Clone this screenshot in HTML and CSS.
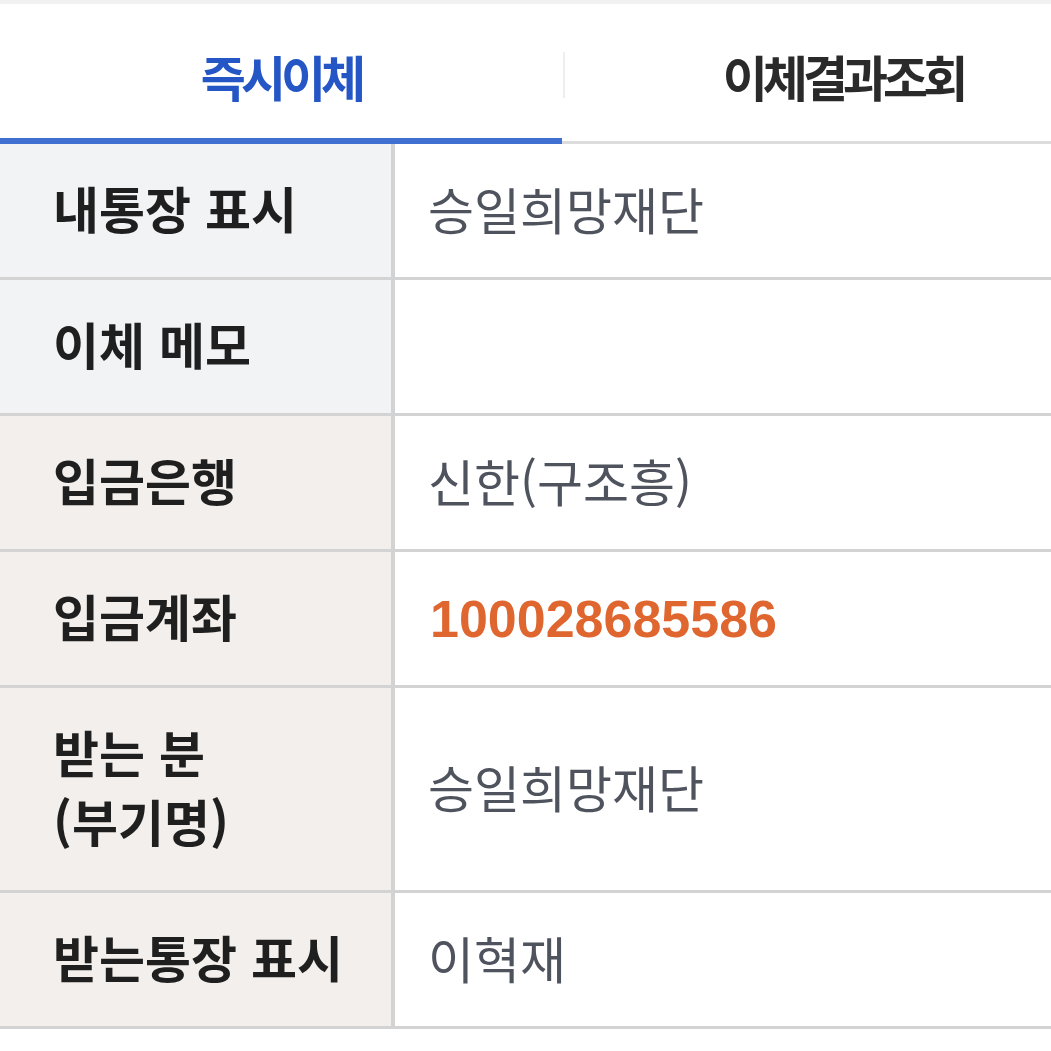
FILE: index.html
```html
<!DOCTYPE html>
<html lang="ko">
<head>
<meta charset="utf-8">
<link rel="stylesheet" href="styles.css">
</head>
<body>
<div class="topband"></div>
<nav class="tabs">
  <div class="tab active"><span>즉시이체</span></div>
  <div class="tab"><span class="sep"></span><span>이체결과조회</span></div>
</nav>
<div class="table">
  <div class="row cool"><div class="label">내통장 표시</div><div class="value">승일희망재단</div></div>
  <div class="row cool"><div class="label">이체 메모</div><div class="value"></div></div>
  <div class="row warm"><div class="label">입금은행</div><div class="value">신한(구조흥)</div></div>
  <div class="row warm"><div class="label">입금계좌</div><div class="value num">100028685586</div></div>
  <div class="row warm"><div class="label">받는 분<br>(부기명)</div><div class="value">승일희망재단</div></div>
  <div class="row warm"><div class="label">받는통장 표시</div><div class="value">이혁재</div></div>
</div>
</body>
</html>
```

FILE: styles.css
```css
* { box-sizing: border-box; }
html, body { margin: 0; padding: 0; background: #fff; overflow: hidden; }
body {
  font-family: "Noto Sans CJK KR", "Noto Sans", sans-serif;
  color: #222;
}
.topband { height: 4px; background: #f1f1f2; }
.tabs {
  display: flex;
  width: 100%;
  height: 140px;
  overflow: hidden;
}
.tab {
  position: relative;
  width: 562px;
  flex: none;
  display: flex;
  align-items: center;
  justify-content: center;
  font-size: 49px;
  font-weight: 700;
  letter-spacing: -5px;
  color: #2a2a2a;
  padding-top: 5px;
  border-bottom: 3px solid #dcdcdc;
}
.tab.active {
  color: #2457c5;
  border-bottom: 6px solid #3f6fd1;
  padding-top: 8px;
}
.tab span { display: block; }
.sep {
  position: absolute;
  left: 1px;
  top: 48px;
  width: 2px;
  height: 46px;
  background: #eeeeee;
}
.row {
  display: flex;
  border-bottom: 3px solid #d3d3d3;
}
.label {
  width: 395px;
  flex: none;
  min-height: 133px;
  padding: 29px 0 35px 53px;
  font-size: 50px;
  line-height: 69px;
  font-weight: 700;
  color: #1f1f1f;
  border-right: 4px solid #d3d3d3;
  display: flex;
  align-items: center;
}
.cool .label { background: #f2f3f5; }
.warm .label { background: #f3efec; }
.value {
  flex: 1;
  display: flex;
  align-items: center;
  padding: 0 0 6px 33px;
  font-size: 50px;
  font-weight: 400;
  color: #4f535d;
}
.value.num {
  font-family: "Liberation Sans", Arial, sans-serif;
  font-weight: 700;
  font-size: 52px;
  padding: 0 0 0 35px;
  color: #e0662f;
}
```
